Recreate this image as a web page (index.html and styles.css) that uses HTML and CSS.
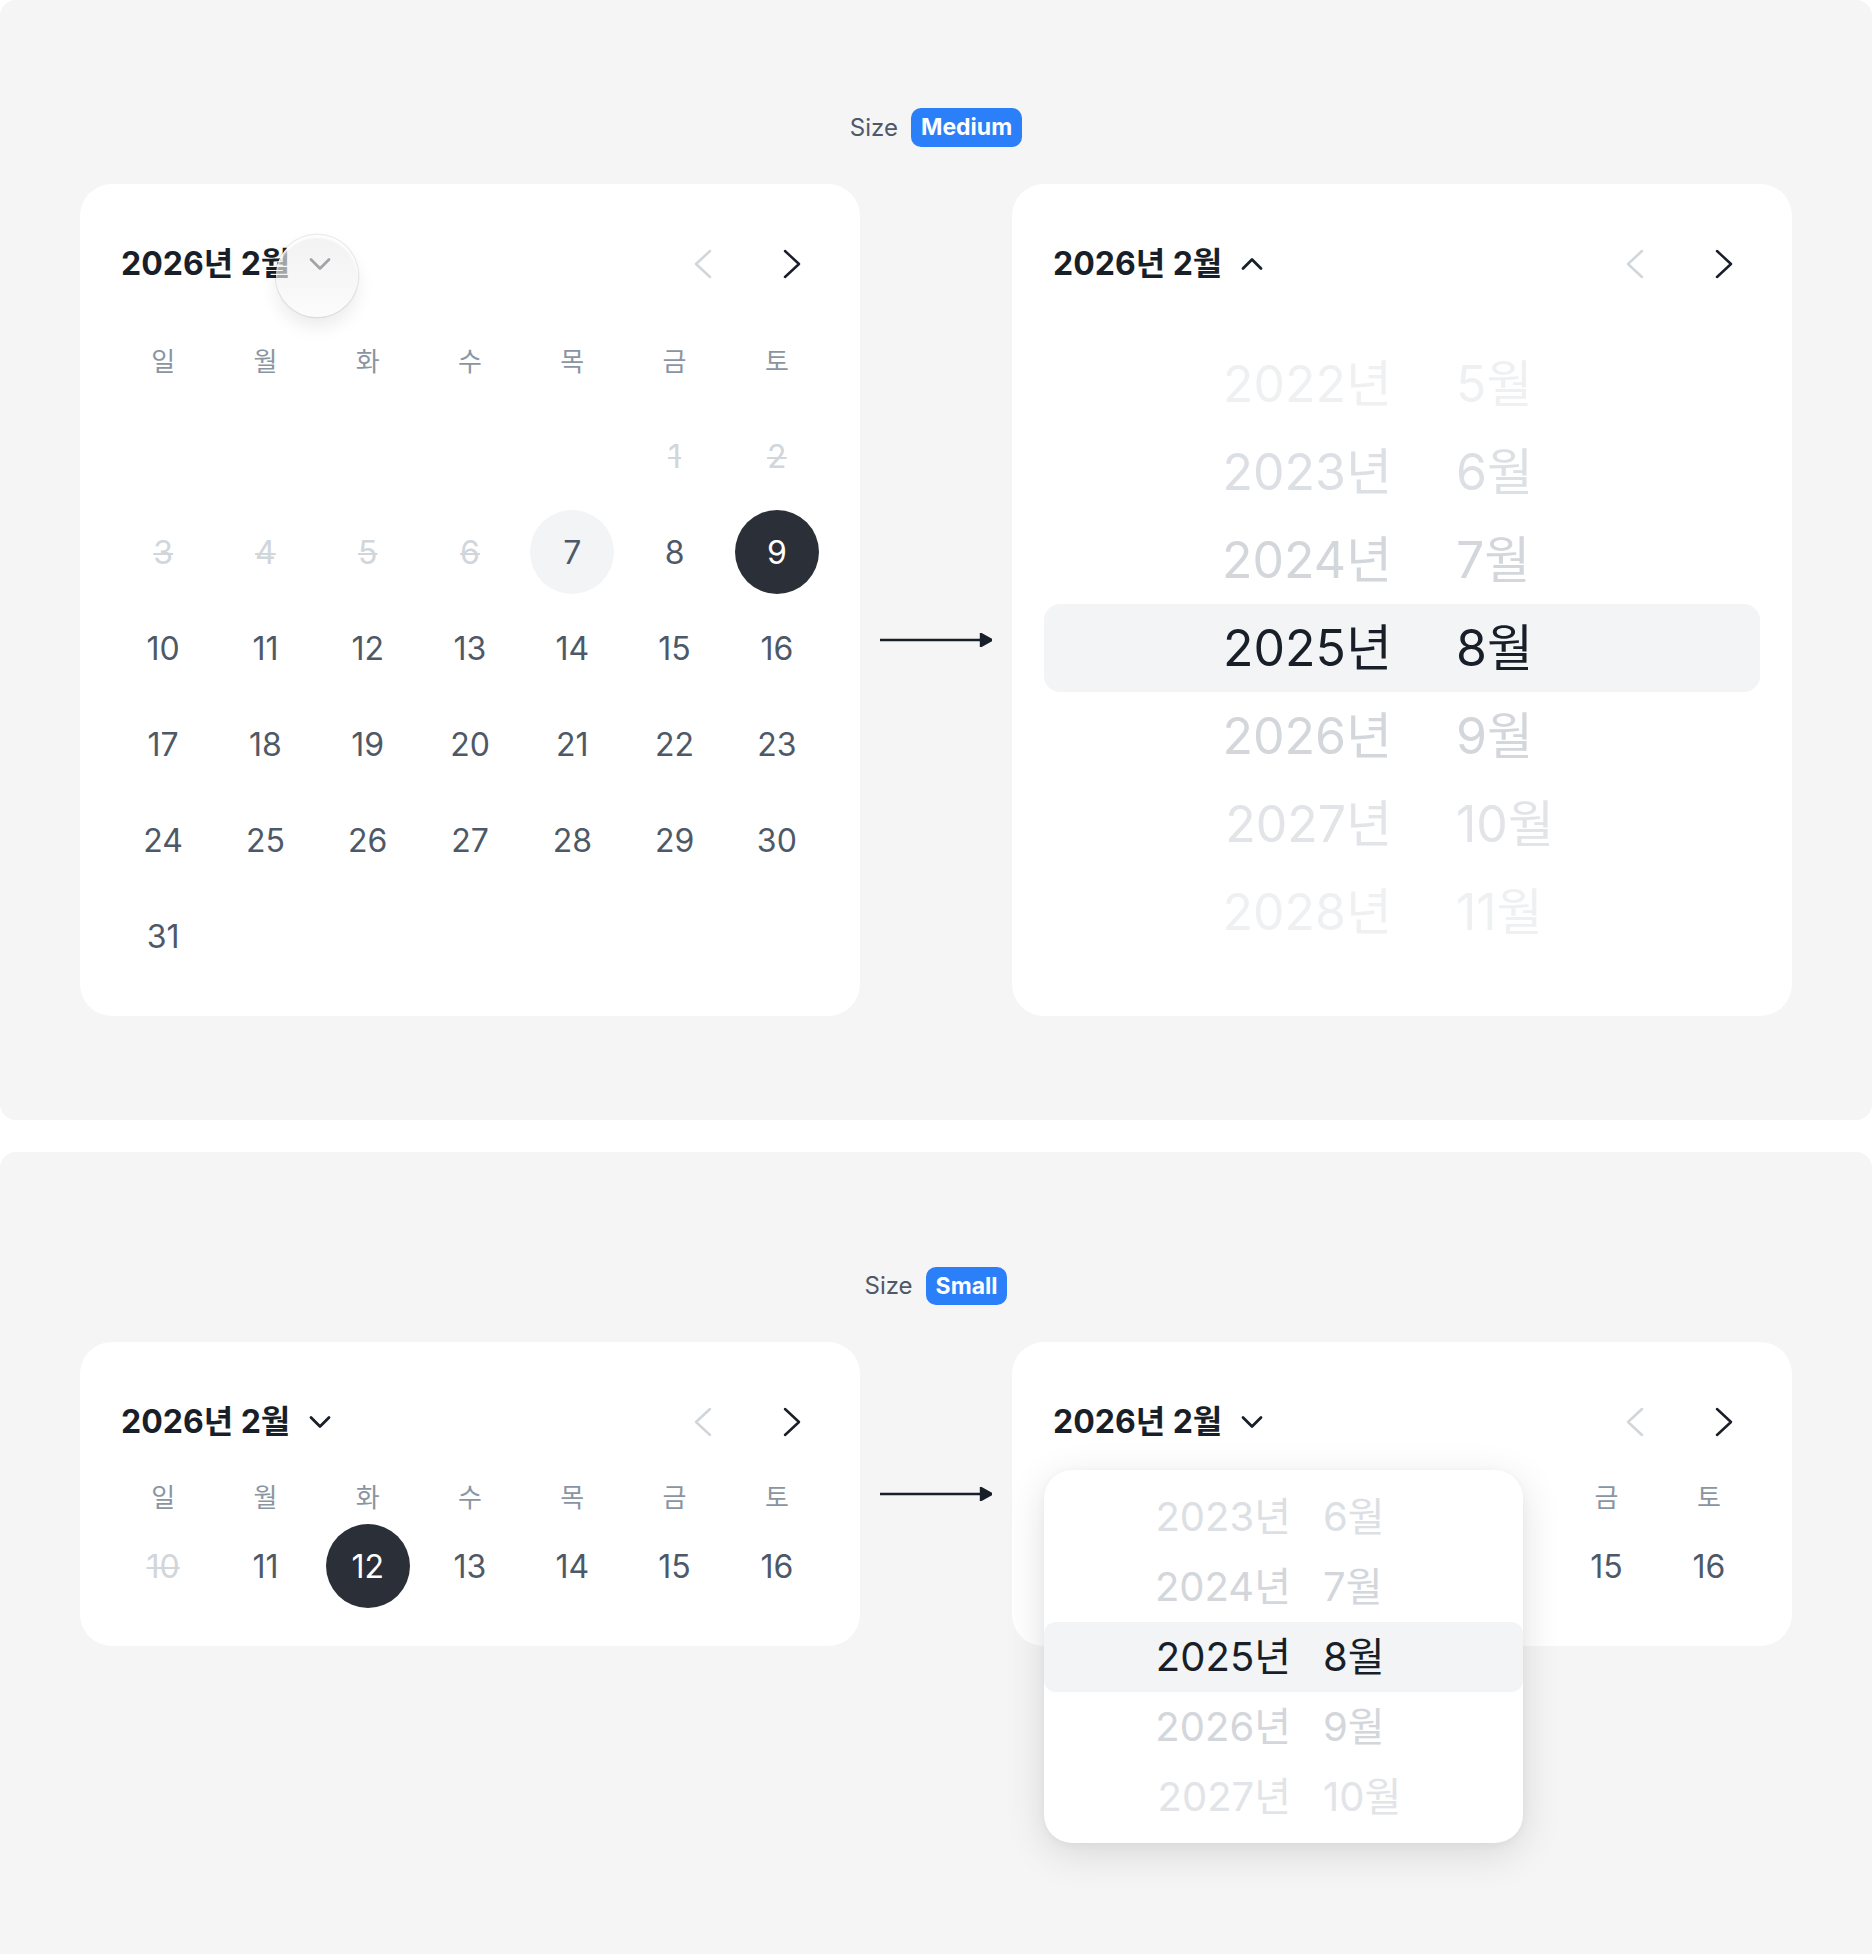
FILE: index.html
```html
<!DOCTYPE html>
<html lang="ko">
<head>
<meta charset="utf-8">
<title>DatePicker sizes</title>
<link rel="stylesheet" href="styles.css">
</head>
<body>
<section class="demo demo--medium">
  <div class="size-label"><span class="size-text">Size</span><span class="badge">Medium</span></div>
  <div class="row">
    <div class="card">
      <div class="header">
        <div class="title">
          <span>2026년 2월</span>
          <span class="chev-wrap">
            <svg class="chev" viewBox="0 0 28 28" width="28" height="28"><path d="M5 9.5 L14 18.5 L23 9.5" /></svg>
            <span class="ripple"></span>
          </span>
        </div>
        <div class="nav">
          <span class="nav-btn"><svg class="navico navico--off" viewBox="0 0 32 32" width="32" height="32"><path d="M21 3 L7 16 L21 29" /></svg></span>
          <span class="nav-btn"><svg class="navico" viewBox="0 0 32 32" width="32" height="32"><path d="M11 3 L25 16 L11 29" /></svg></span>
        </div>
      </div>
      <div class="grid grid--medium">
        <span class="wd">일</span><span class="wd">월</span><span class="wd">화</span><span class="wd">수</span><span class="wd">목</span><span class="wd">금</span><span class="wd">토</span>
        <span></span><span></span><span></span><span></span><span></span><span class="day day--off">1</span><span class="day day--off">2</span>
        <span class="day day--off">3</span><span class="day day--off">4</span><span class="day day--off">5</span><span class="day day--off">6</span><span class="day day--today">7</span><span class="day">8</span><span class="day day--sel">9</span>
        <span class="day">10</span><span class="day">11</span><span class="day">12</span><span class="day">13</span><span class="day">14</span><span class="day">15</span><span class="day">16</span>
        <span class="day">17</span><span class="day">18</span><span class="day">19</span><span class="day">20</span><span class="day">21</span><span class="day">22</span><span class="day">23</span>
        <span class="day">24</span><span class="day">25</span><span class="day">26</span><span class="day">27</span><span class="day">28</span><span class="day">29</span><span class="day">30</span>
        <span class="day">31</span>
      </div>
    </div>
    <svg class="arrow arrow--medium" viewBox="0 0 112 14" width="112" height="14"><line x1="0" y1="7" x2="103" y2="7" /><polygon points="101,1 112,7 101,13" /></svg>
    <div class="card">
      <div class="header">
        <div class="title">
          <span>2026년 2월</span>
          <span class="chev-wrap"><svg class="chev" viewBox="0 0 28 28" width="28" height="28"><path d="M5 18.5 L14 9.5 L23 18.5" /></svg></span>
        </div>
        <div class="nav">
          <span class="nav-btn"><svg class="navico navico--off" viewBox="0 0 32 32" width="32" height="32"><path d="M21 3 L7 16 L21 29" /></svg></span>
          <span class="nav-btn"><svg class="navico" viewBox="0 0 32 32" width="32" height="32"><path d="M11 3 L25 16 L11 29" /></svg></span>
        </div>
      </div>
      <div class="picker">
        <div class="prow c3"><span class="y">2022년</span><span>5월</span></div>
        <div class="prow c2"><span class="y">2023년</span><span>6월</span></div>
        <div class="prow c1"><span class="y">2024년</span><span>7월</span></div>
        <div class="prow prow--sel"><span class="y">2025년</span><span>8월</span></div>
        <div class="prow c1"><span class="y">2026년</span><span>9월</span></div>
        <div class="prow c2b"><span class="y">2027년</span><span>10월</span></div>
        <div class="prow c3"><span class="y">2028년</span><span>11월</span></div>
      </div>
    </div>
  </div>
</section>

<section class="demo demo--small">
  <div class="size-label"><span class="size-text">Size</span><span class="badge badge--small">Small</span></div>
  <div class="row">
    <div class="card card--small">
      <div class="header">
        <div class="title">
          <span>2026년 2월</span>
          <span class="chev-wrap"><svg class="chev" viewBox="0 0 28 28" width="28" height="28"><path d="M5 9.5 L14 18.5 L23 9.5" /></svg></span>
        </div>
        <div class="nav">
          <span class="nav-btn"><svg class="navico navico--off" viewBox="0 0 32 32" width="32" height="32"><path d="M21 3 L7 16 L21 29" /></svg></span>
          <span class="nav-btn"><svg class="navico" viewBox="0 0 32 32" width="32" height="32"><path d="M11 3 L25 16 L11 29" /></svg></span>
        </div>
      </div>
      <div class="grid grid--small">
        <span class="wd">일</span><span class="wd">월</span><span class="wd">화</span><span class="wd">수</span><span class="wd">목</span><span class="wd">금</span><span class="wd">토</span>
        <span class="day day--off">10</span><span class="day">11</span><span class="day day--sel">12</span><span class="day">13</span><span class="day">14</span><span class="day">15</span><span class="day">16</span>
      </div>
    </div>
    <svg class="arrow" viewBox="0 0 112 14" width="112" height="14"><line x1="0" y1="7" x2="103" y2="7" /><polygon points="101,1 112,7 101,13" /></svg>
    <div class="card card--small">
      <div class="header">
        <div class="title">
          <span>2026년 2월</span>
          <span class="chev-wrap"><svg class="chev" viewBox="0 0 28 28" width="28" height="28"><path d="M5 9.5 L14 18.5 L23 9.5" /></svg></span>
        </div>
        <div class="nav">
          <span class="nav-btn"><svg class="navico navico--off" viewBox="0 0 32 32" width="32" height="32"><path d="M21 3 L7 16 L21 29" /></svg></span>
          <span class="nav-btn"><svg class="navico" viewBox="0 0 32 32" width="32" height="32"><path d="M11 3 L25 16 L11 29" /></svg></span>
        </div>
      </div>
      <div class="grid grid--small">
        <span class="wd covered">일</span><span class="wd covered">월</span><span class="wd covered">화</span><span class="wd covered">수</span><span class="wd covered">목</span><span class="wd">금</span><span class="wd">토</span>
        <span class="day day--off covered">10</span><span class="day covered">11</span><span class="day day--sel covered">12</span><span class="day covered">13</span><span class="day covered">14</span><span class="day">15</span><span class="day">16</span>
      </div>
      <div class="popup">
        <div class="pop-row c2"><span class="y">2023년</span><span>6월</span></div>
        <div class="pop-row c1"><span class="y">2024년</span><span>7월</span></div>
        <div class="pop-row pop-row--sel"><span class="y">2025년</span><span>8월</span></div>
        <div class="pop-row c1"><span class="y">2026년</span><span>9월</span></div>
        <div class="pop-row c2b"><span class="y">2027년</span><span>10월</span></div>
      </div>
    </div>
  </div>
</section>
</body>
</html>
```

FILE: styles.css
```css
* { box-sizing: border-box; }

html, body {
  margin: 0;
  background: #ffffff;
}

body {
  font-family: Inter, "Noto Sans CJK KR", sans-serif;
  color: #191f28;
}

.demo {
  background: #f5f5f5;
  border-radius: 16px;
  display: flex;
  flex-direction: column;
  align-items: center;
  gap: 37px;
}

.demo--medium {
  height: 1120px;
  padding-top: 108px;
}

.demo--small {
  margin-top: 32px;
  height: 802px;
  padding-top: 115px;
  border-radius: 16px 16px 0 0;
}

.size-label {
  display: flex;
  align-items: center;
  gap: 13px;
}

.size-text {
  font-size: 24px;
  color: #4e5968;
  line-height: 1;
}

.badge {
  height: 39px;
  padding: 0 10px;
  border-radius: 10px;
  background: #2b7ff8;
  color: #ffffff;
  font-size: 23px;
  font-weight: 700;
  display: flex;
  align-items: center;
  line-height: 1;
}

.badge--small {
  height: 38px;
}

.row {
  display: flex;
}

.card {
  width: 780px;
  background: #ffffff;
  border-radius: 32px;
  padding: 48px 32px 32px;
  position: relative;
}

.card--small {
  padding-bottom: 38px;
}

.header {
  height: 64px;
  display: flex;
  align-items: center;
  justify-content: space-between;
  padding: 0 14px 0 9px;
}

.title {
  display: flex;
  align-items: center;
  gap: 16px;
  font-size: 32px;
  font-weight: 700;
  line-height: 1;
  color: #191f28;
}

.chev-wrap {
  position: relative;
  width: 28px;
  height: 28px;
  display: block;
}

.chev {
  display: block;
  fill: none;
  stroke: #191f28;
  stroke-width: 2.8;
  stroke-linecap: round;
  stroke-linejoin: round;
}

.ripple {
  position: absolute;
  left: -30px;
  top: -15px;
  width: 82px;
  height: 82px;
  border-radius: 50%;
  background: linear-gradient(180deg, rgba(234, 234, 234, 0.64) 0%, rgba(250, 250, 250, 0.64) 100%);
  box-shadow: 0 0 0 1.5px rgba(0, 0, 0, 0.07), inset 0 3px 2px rgba(255, 255, 255, 0.9), 0 10px 18px rgba(0, 0, 0, 0.08);
  z-index: 1;
}

.nav {
  display: flex;
  gap: 37px;
}

.nav-btn {
  width: 48px;
  height: 48px;
  display: flex;
  align-items: center;
  justify-content: center;
}

.navico {
  display: block;
  fill: none;
  stroke: #191f28;
  stroke-width: 2.5;
  stroke-linecap: round;
  stroke-linejoin: round;
}

.navico--off {
  stroke: #d1d6db;
}

.grid {
  display: grid;
  grid-template-columns: repeat(7, 1fr);
  place-items: center;
}

.grid--medium {
  margin-top: 16px;
  grid-auto-rows: 96px;
}

.grid--small {
  margin-top: 14px;
  grid-template-rows: 56px 84px;
}

.wd {
  font-family: "Noto Sans CJK KR", sans-serif;
  font-size: 26px;
  color: #8b95a1;
  line-height: 1;
}

.day {
  width: 84px;
  height: 84px;
  border-radius: 50%;
  display: flex;
  align-items: center;
  justify-content: center;
  padding-top: 2px;
  font-size: 32px;
  line-height: 1;
  color: #4e5968;
}

.day--off {
  color: #d1d6db;
  text-decoration: line-through;
  text-decoration-thickness: 2px;
}

.day--today {
  background: #f2f4f6;
}

.day--sel {
  background: #2b3038;
  color: #ffffff;
}

.covered {
  visibility: hidden;
}

.arrow {
  align-self: center;
  margin: 0 20px;
  display: block;
  stroke: #191f28;
  stroke-width: 2.4;
  fill: #191f28;
}

.arrow--medium {
  margin-top: 80px;
}

.picker {
  margin-top: 44px;
  display: flex;
  flex-direction: column;
}

.prow {
  height: 88px;
  display: grid;
  grid-template-columns: 348px 1fr;
  column-gap: 64px;
  align-items: center;
  font-size: 50px;
  line-height: 1;
  border-radius: 16px;
}

.y {
  text-align: right;
}

.prow--sel,
.pop-row--sel {
  background: #f2f4f6;
  color: #191f28;
}

.c1 { color: #d3d6db; }
.c2 { color: #dcdfe3; }
.c2b { color: #e2e4e8; }
.c3 { color: #eef0f2; }

.popup {
  position: absolute;
  left: 32px;
  top: 128px;
  width: 479px;
  padding: 12px 0 11px;
  background: #ffffff;
  border-radius: 28px;
  box-shadow: 0 10px 40px rgba(0, 0, 0, 0.12), 0 2px 8px rgba(0, 0, 0, 0.04);
  z-index: 2;
}

.pop-row {
  height: 70px;
  display: grid;
  grid-template-columns: 247px 1fr;
  column-gap: 32px;
  align-items: center;
  font-size: 40px;
  line-height: 1;
  border-radius: 12px;
}
```
